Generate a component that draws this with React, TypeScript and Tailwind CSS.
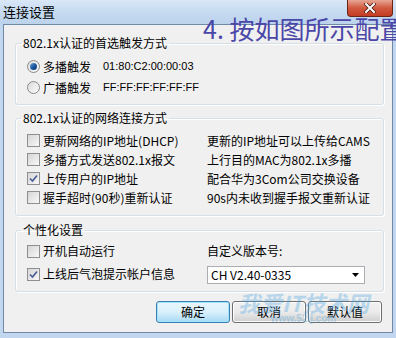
import React from 'react';

const cjk = { fontFamily: '"Noto Sans CJK SC", "Liberation Sans", sans-serif' };
const latin = { fontFamily: '"Liberation Sans", "Noto Sans CJK SC", sans-serif' };

function Radio({ checked }: { checked?: boolean }) {
  return (
    <span className="flex h-[13px] w-[13px] shrink-0 items-center justify-center rounded-full border border-[#8a8a8a] bg-gradient-to-br from-[#dcdcdc] to-[#fafafa]">
      {checked && (
        <span className="h-[7px] w-[7px] rounded-full bg-gradient-to-br from-[#6fa4d8] via-[#1d5aa3] to-[#0c3570]" />
      )}
    </span>
  );
}

function Check({ checked }: { checked?: boolean }) {
  return (
    <span className="flex h-[13px] w-[13px] shrink-0 items-center justify-center border border-[#8e8f8f] bg-gradient-to-br from-[#d6d6d6] to-[#f8f8f8]">
      {checked && (
        <svg width="9" height="9" viewBox="0 0 9 9">
          <path d="M1 4.5 L3.5 7 L8 1.5" fill="none" stroke="#4a5f97" strokeWidth="1.7" />
        </svg>
      )}
    </span>
  );
}

function Group({ title, className, children }: { title: string; className: string; children: React.ReactNode }) {
  return (
    <fieldset
      className={`ml-[11px] w-[369px] rounded-[3px] border border-[#d5dfe5] shadow-[inset_1px_1px_0_#fff,1px_1px_0_#fff] ${className}`}
    >
      <legend className="ml-[5px] px-[2px] text-[12px] leading-[16px] text-black" style={cjk}>
        {title}
      </legend>
      {children}
    </fieldset>
  );
}

function Btn({ label, primary }: { label: string; primary?: boolean }) {
  return (
    <button
      className={`h-[22px] w-[74px] rounded-[3px] border text-[12px] text-black ${
        primary
          ? 'border-[#3c7fb1] bg-gradient-to-b from-[#eaf6fd] via-[#d9f0fc] to-[#a7d9f5] shadow-[inset_0_0_0_1px_#9ee4ff]'
          : 'border-[#707070] bg-gradient-to-b from-[#f2f2f2] via-[#ebebeb] to-[#cfcfcf] shadow-[inset_0_0_0_1px_#fcfcfc]'
      }`}
      style={cjk}
    >
      {label}
    </button>
  );
}

const rows: [string, string, boolean][] = [
  ['更新网络的IP地址(DHCP)', '更新的IP地址可以上传给CAMS', false],
  ['多播方式发送802.1x报文', '上行目的MAC为802.1x多播', false],
  ['上传用户的IP地址', '配合华为3Com公司交换设备', true],
  ['握手超时(90秒)重新认证', '90s内未收到握手报文重新认证', false],
];

export default function App() {
  return (
    <div className="relative flex h-[338px] w-[396px] flex-col overflow-hidden bg-[#c2d7ef]" style={cjk}>
      <div className="flex h-[24px] shrink-0 items-center bg-gradient-to-b from-[#d9e7f7] via-[#c6dbf1] to-[#bcd3ec] pl-[3px]">
        <span className="text-[13px] text-black">连接设置</span>
        <div className="ml-auto mr-[3px] flex h-[17px] w-[46px] self-start items-center justify-center rounded-b-[4px] border border-t-0 border-[#6b2418] bg-gradient-to-b from-[#e7a595] via-[#d0583e] to-[#c33b22]">
          <svg width="12" height="10" viewBox="0 0 12 10">
            <path d="M2 1 L10 9 M10 1 L2 9" stroke="#4a1a12" strokeWidth="3.6" strokeLinecap="square" />
            <path d="M2 1 L10 9 M10 1 L2 9" stroke="#ffffff" strokeWidth="2" strokeLinecap="square" />
          </svg>
        </div>
      </div>

      <div className="mx-[3px] mb-[5px] flex flex-1 flex-col border border-[#6f8aa8] bg-[#f0f0f0]">
        <Group title="802.1x认证的首选触发方式" className="mt-[10px] h-[70px]">
          <div className="flex flex-col pl-[11px] pt-[5px] text-[12px] text-black">
            <div className="flex h-[21px] items-center">
              <Radio checked />
              <span className="ml-[3px] w-[60px]">多播触发</span>
              <span className="text-[11px]" style={latin}>01:80:C2:00:00:03</span>
            </div>
            <div className="flex h-[21px] items-center">
              <Radio />
              <span className="ml-[3px] w-[60px]">广播触发</span>
              <span className="text-[11px]" style={latin}>FF:FF:FF:FF:FF:FF</span>
            </div>
          </div>
        </Group>

        <Group title="802.1x认证的网络连接方式" className="mt-[5px] h-[106px]">
          <div className="grid grid-cols-[180px_1fr] pl-[11px] pt-[5px] text-[12px] text-black">
            {rows.map(([a, b, c]) => (
              <React.Fragment key={a}>
                <div className="flex h-[19px] items-center">
                  <Check checked={c} />
                  <span className="ml-[3px]">{a}</span>
                </div>
                <div className="flex h-[19px] items-center">{b}</div>
              </React.Fragment>
            ))}
          </div>
        </Group>

        <Group title="个性化设置" className="mt-[6px] h-[70px]">
          <div className="grid grid-cols-[180px_1fr] pl-[11px] pt-[2px] text-[12px] text-black">
            <div className="flex flex-col">
              <div className="flex h-[22px] items-center">
                <Check />
                <span className="ml-[3px]">开机自动运行</span>
              </div>
              <div className="mt-[1px] flex h-[22px] items-center">
                <Check checked />
                <span className="ml-[3px]">上线后气泡提示帐户信息</span>
              </div>
            </div>
            <div className="flex flex-col items-start">
              <div className="flex h-[22px] items-center">自定义版本号:</div>
              <div className="mt-[4px] flex h-[18px] w-[158px] items-center border border-[#abadb3] bg-white pl-[3px] pr-[5px]">
                <span className="text-[12px]">CH V2.40-0335</span>
                <svg className="ml-auto" width="7" height="4" viewBox="0 0 7 4">
                  <path d="M0 0 H7 L3.5 4 Z" fill="#000" />
                </svg>
              </div>
            </div>
          </div>
        </Group>

        <div className="mt-[9px] flex justify-end gap-[2px] pr-[10px]">
          <Btn label="确定" primary />
          <Btn label="取消" />
          <Btn label="默认值" />
        </div>
      </div>

      <div className="pointer-events-none absolute left-[203px] top-[16px] whitespace-nowrap text-[25px] leading-[25px] text-[#4a47a8]">
        4. 按如图所示配置
      </div>

      <div className="pointer-events-none absolute left-[238px] top-[290px] flex flex-col items-center opacity-35">
        <span className="text-[22px] font-bold italic leading-[24px] text-[#4fa6e0]">我爱IT技术网</span>
        <span className="text-[10px] font-bold leading-[10px] text-[#4fa6e0]" style={latin}>
          www.52ij.com
        </span>
      </div>
    </div>
  );
}
